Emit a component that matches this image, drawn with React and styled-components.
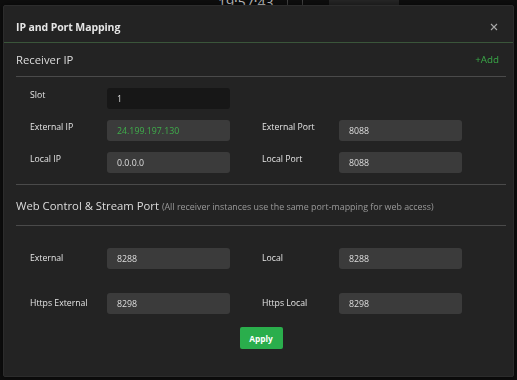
import React from "react";
import styled, { createGlobalStyle } from "styled-components";

const GlobalStyle = createGlobalStyle`
  html, body {
    margin: 0;
    padding: 0;
    background: #0e0e0e;
    font-family: "Open Sans", "Noto Sans", sans-serif;
    overflow: hidden;
  }
  * { box-sizing: border-box; }
`;

// page that sits behind the dialog, only a sliver shows at the top
const Page = styled.div`
  width: 517px;
  height: 380px;
  background: #0e0e0e;
`;

const TopBar = styled.div`
  display: flex;
  align-items: flex-end;
  height: 6px;
  overflow: hidden;
  padding-left: 218px;
  gap: 14px;
`;

const Clock = styled.span`
  font-size: 14px;
  line-height: 14px;
  color: #c8c8c8;
  transform: translateY(4px);
`;

const Tick = styled.span`
  width: 1px;
  height: 6px;
  background: #444;
`;

const Meter = styled.span`
  width: 70px;
  height: 6px;
  margin-left: 12px;
  background: #262626;
`;

const Backdrop = styled.div`
  position: fixed;
  inset: 0;
  padding: 5px 3px 3px 3px;
`;

const Dialog = styled.div`
  width: 511px;
  height: 372px;
  background: #232323;
  border: 1px solid #2c2c2c;
  border-radius: 2px;
  box-shadow: 0 0 6px rgba(0, 0, 0, 0.6);
  display: flex;
  flex-direction: column;
`;

const Header = styled.div`
  display: flex;
  align-items: center;
  justify-content: space-between;
  height: 37px;
  padding: 5px 13px 0 12px;
  border-bottom: 1px solid #3a553a;
`;

const Title = styled.h1`
  margin: 0;
  font-size: 10.5px;
  font-weight: 700;
  color: #e6e6e6;
  letter-spacing: -0.1px;
`;

const CloseButton = styled.button`
  display: flex;
  align-items: center;
  justify-content: center;
  width: 12px;
  height: 12px;
  padding: 0;
  border: 0;
  background: transparent;
  cursor: pointer;
`;

const Body = styled.div`
  display: flex;
  flex-direction: column;
  padding: 0 7px 0 12px;
`;

const SectionHead = styled.div`
  display: flex;
  align-items: center;
  justify-content: space-between;
  height: ${(p) => p.$height}px;
  padding-right: 7px;
  border-bottom: 1px solid #4a4a4a;
`;

const SectionTitle = styled.h2`
  margin: 0;
  font-size: 11.3px;
  font-weight: 400;
  color: #dcdcdc;
`;

const Note = styled.span`
  font-size: 8.9px;
  color: #9a9a9a;
`;

const AddLink = styled.a`
  font-size: 9.8px;
  color: #3aaa48;
  text-decoration: none;
  cursor: pointer;
`;

const Rows = styled.div`
  display: flex;
  flex-direction: column;
  gap: ${(p) => p.$gap}px;
  padding: ${(p) => p.$pad};
  padding-left: 14px;
  border-bottom: ${(p) => (p.$divided ? "1px solid #4a4a4a" : "0")};
`;

const Row = styled.div`
  display: flex;
  gap: 32px;
`;

const Field = styled.label`
  display: flex;
  align-items: ${(p) => (p.$centered ? "center" : "flex-start")};
`;

const Label = styled.span`
  width: 77px;
  line-height: 15px;
  font-size: 8.7px;
  color: #e4e4e4;
`;

const Input = styled.input`
  width: 123px;
  height: 21px;
  padding: 0 10px;
  border: 0;
  border-radius: 3px;
  outline: none;
  background: ${(p) => (p.$dark ? "#171717" : "#3b3b3b")};
  color: ${(p) => (p.$accent ? "#3fae4b" : "#dedede")};
  font-family: inherit;
  font-size: 8.8px;
`;

const Footer = styled.div`
  display: flex;
  justify-content: center;
  padding-top: 13px;
`;

const ApplyButton = styled.button`
  width: 43px;
  height: 22px;
  border: 0;
  border-radius: 2px;
  background: #2aae4c;
  color: #ffffff;
  font-family: inherit;
  font-size: 8.3px;
  font-weight: 700;
  cursor: pointer;
`;

function CloseIcon() {
  return (
    <svg width="8" height="8" viewBox="0 0 8 8">
      <path d="M1 1 L7 7 M7 1 L1 7" stroke="#a8a8a8" strokeWidth="1.1" />
    </svg>
  );
}

function InputField({ label, value, dark, accent, centered }) {
  return (
    <Field $centered={centered}>
      <Label>{label}</Label>
      <Input defaultValue={value} $dark={dark} $accent={accent} />
    </Field>
  );
}

export default function App() {
  return (
    <>
      <GlobalStyle />
      <Page>
        <TopBar>
          <Clock>19:57:43</Clock>
          <Tick />
          <Tick />
          <Meter />
        </TopBar>
      </Page>

      <Backdrop>
        <Dialog>
          <Header>
            <Title>IP and Port Mapping</Title>
            <CloseButton aria-label="Close">
              <CloseIcon />
            </CloseButton>
          </Header>

          <Body>
            <SectionHead $height={34}>
              <SectionTitle>Receiver IP</SectionTitle>
              <AddLink>+Add</AddLink>
            </SectionHead>

            <Rows $gap={11} $pad="11px 0 11px" $divided>
              <Row>
                <InputField label="Slot" value="1" dark />
              </Row>
              <Row>
                <InputField label="External IP" value="24.199.197.130" accent />
                <InputField label="External Port" value="8088" />
              </Row>
              <Row>
                <InputField label="Local IP" value="0.0.0.0" />
                <InputField label="Local Port" value="8088" />
              </Row>
            </Rows>

            <SectionHead $height={41}>
              <SectionTitle>
                Web Control &amp; Stream Port{" "}
                <Note>(All receiver instances use the same port-mapping for web access)</Note>
              </SectionTitle>
            </SectionHead>

            <Rows $gap={24} $pad="22px 0 0">
              <Row>
                <InputField label="External" value="8288" centered />
                <InputField label="Local" value="8288" centered />
              </Row>
              <Row>
                <InputField label="Https External" value="8298" centered />
                <InputField label="Https Local" value="8298" centered />
              </Row>
            </Rows>

            <Footer>
              <ApplyButton>Apply</ApplyButton>
            </Footer>
          </Body>
        </Dialog>
      </Backdrop>
    </>
  );
}
